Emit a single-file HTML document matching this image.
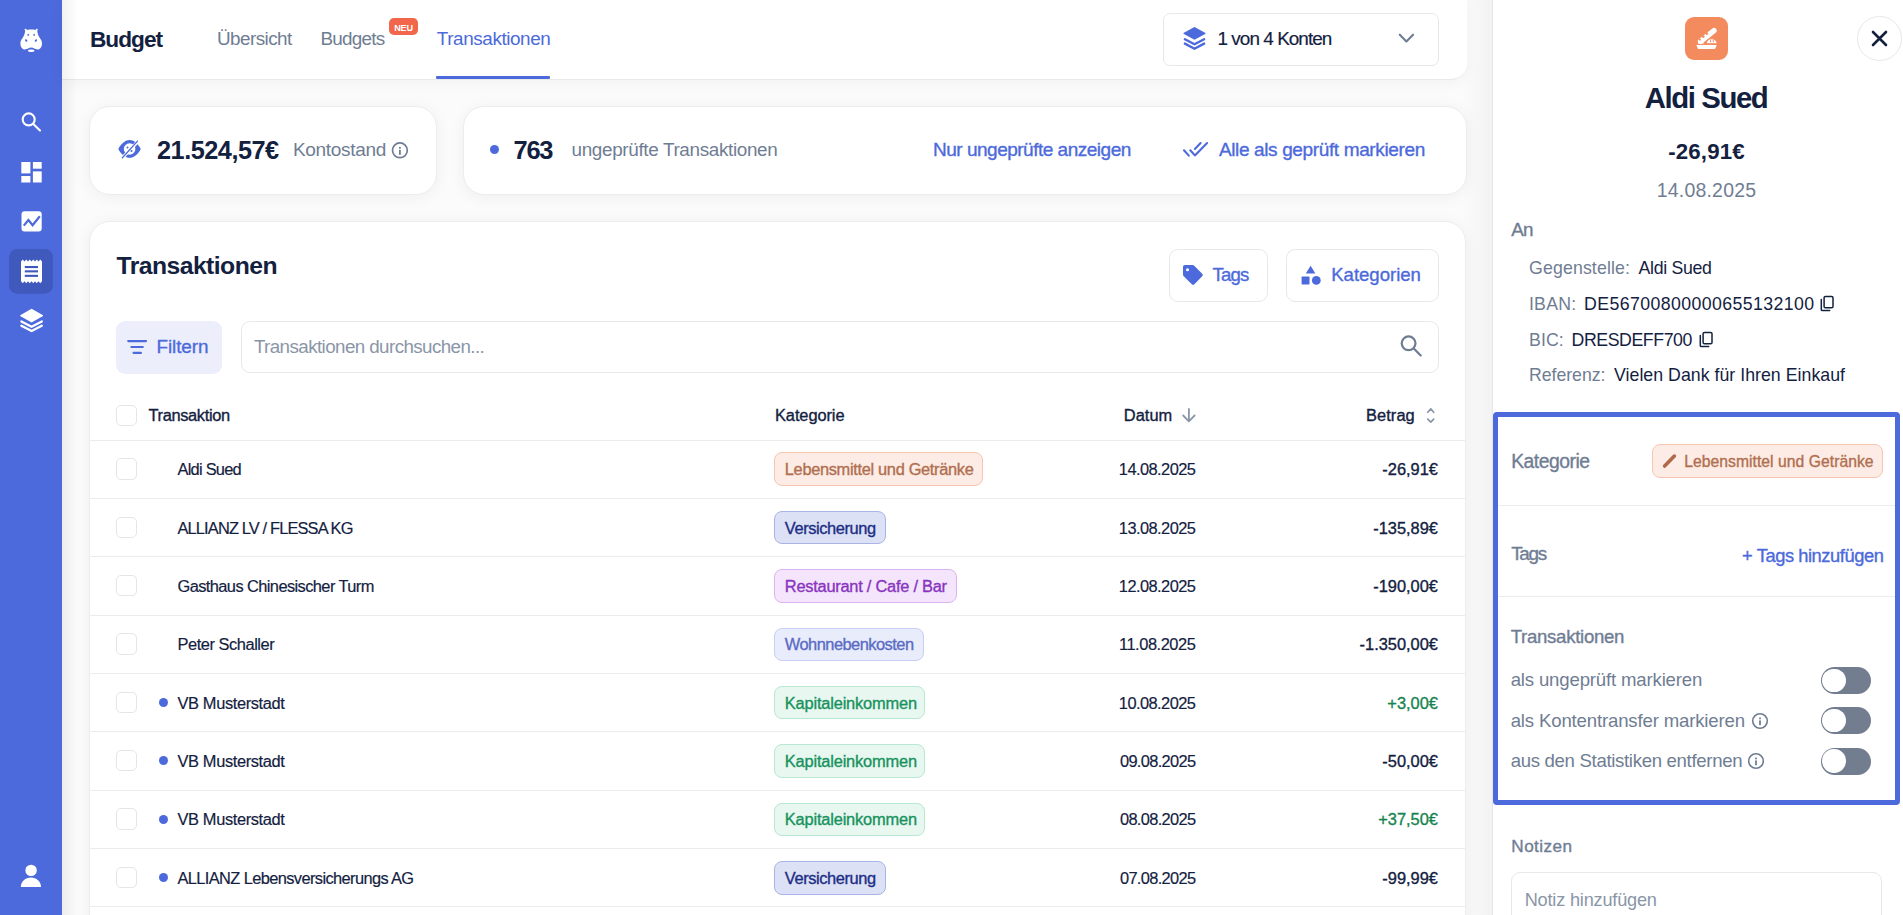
<!DOCTYPE html>
<html><head><meta charset="utf-8">
<style>
*{box-sizing:border-box;margin:0;padding:0}
html,body{width:1903px;height:915px;overflow:hidden}
body{font-family:"Liberation Sans",sans-serif;background:#fbfbfb;position:relative;color:#13213f}
.abs{position:absolute}
.t{position:absolute;white-space:nowrap;line-height:1}
.cb{position:absolute;width:21.5px;height:21.5px;border:1px solid #e3e6ea;border-radius:5px;background:#fff}
.pill{position:absolute;height:33.5px;border-radius:8px;border:1px solid}
.p-or{background:#fdece5;border-color:#f8c5b0}
.p-bl{background:#dde1f5;border-color:#a8b4e6}
.p-pu{background:#f4e5fc;border-color:#ddb2f1}
.p-lb{background:#e9ecfb;border-color:#c8cff2}
.p-gr{background:#e8f8f1;border-color:#b6e8d2}
.dot{position:absolute;width:9px;height:9px;border-radius:50%;background:#4c6adb}
.tog{position:absolute;width:50px;height:27px;border-radius:14px;background:#737d90}
.tog:after{content:"";position:absolute;left:1.7px;top:1.7px;width:23.6px;height:23.6px;border-radius:50%;background:#fff}
.card{position:absolute;background:#fff;border:1px solid #ededee;border-radius:21px;box-shadow:0 2px 16px rgba(0,0,0,.055)}
</style></head><body>
<div class="abs" style="left:1462px;top:0;width:30px;height:915px;background:linear-gradient(90deg,rgba(0,0,0,0),rgba(0,0,0,.035))"></div>
<div class="abs" style="left:0px;top:0px;width:62px;height:915px;background:#4c6adb"></div>
<div class="abs" style="left:62px;top:0;width:1404.5px;height:80px;background:#fff;border-bottom:1px solid #e9e9ea;border-bottom-right-radius:16px;box-shadow:0 3px 14px rgba(0,0,0,.04)"></div>
<div class="abs" style="left:62px;top:0;width:16px;height:915px;background:linear-gradient(90deg,rgba(0,0,0,.055),rgba(0,0,0,0))"></div>
<div id="t1" class="t" style="top:28.00px;font-size:22.67px;color:#13213f;font-weight:bold;left:90.00px;letter-spacing:-1.000px;">Budget</div>
<div id="t2" class="t" style="top:30.00px;font-size:18.90px;color:#6f7d93;left:217.00px;letter-spacing:-0.562px;">Übersicht</div>
<div id="t3" class="t" style="top:30.00px;font-size:18.90px;color:#6f7d93;left:320.50px;letter-spacing:-0.750px;">Budgets</div>
<div class="abs" style="left:389.2px;top:17.9px;width:28.6px;height:17.5px;background:#f2674b;border-radius:5px"></div>
<div id="t4" class="t" style="top:24.00px;font-size:9.16px;color:#fff;font-weight:bold;left:403.50px;transform:translateX(-50%);letter-spacing:-0.250px;">NEU</div>
<div id="t5" class="t" style="top:30.00px;font-size:18.90px;color:#4c6adb;left:436.80px;letter-spacing:-0.417px;">Transaktionen</div>
<div class="abs" style="left:436.2px;top:75.6px;width:113.6px;height:3.2px;background:#4c6adb;border-radius:1px"></div>
<div class="abs" style="left:1162.5px;top:12.5px;width:276.5px;height:53px;background:#fff;border:1px solid #e6e8ec;border-radius:7px"></div>
<div id="t6" class="t" style="top:30.00px;font-size:18.90px;color:#13213f;left:1217.50px;-webkit-text-stroke:0.18px #13213f;letter-spacing:-0.946px;">1 von 4 Konten</div>
<div class="card" style="left:88.8px;top:105.5px;width:348px;height:89px"></div>
<div id="t7" class="t" style="top:138.00px;font-size:25.29px;color:#13213f;font-weight:bold;left:157.00px;letter-spacing:-0.489px;">21.524,57€</div>
<div id="t8" class="t" style="top:140.00px;font-size:19.04px;color:#6f7d93;left:292.90px;letter-spacing:-0.322px;">Kontostand</div>
<div class="card" style="left:463px;top:105.5px;width:1003.5px;height:89px"></div>
<div class="dot" style="left:490px;top:144.8px"></div>
<div id="t9" class="t" style="top:138.00px;font-size:25.44px;color:#13213f;font-weight:bold;left:513.50px;letter-spacing:-1.250px;">763</div>
<div id="t10" class="t" style="top:141.00px;font-size:18.90px;color:#6f7d93;left:571.50px;letter-spacing:-0.348px;">ungeprüfte Transaktionen</div>
<div id="t11" class="t" style="top:140.00px;font-size:19.04px;color:#4c6adb;left:933.00px;-webkit-text-stroke:0.35px #4c6adb;letter-spacing:-0.509px;">Nur ungeprüfte anzeigen</div>
<div id="t12" class="t" style="top:140.00px;font-size:19.04px;color:#4c6adb;left:1218.90px;-webkit-text-stroke:0.35px #4c6adb;letter-spacing:-0.376px;">Alle als geprüft markieren</div>
<div class="card" style="left:88.8px;top:220.5px;width:1377.7px;height:760px"></div>
<div id="t13" class="t" style="top:254.00px;font-size:24.71px;color:#13213f;font-weight:bold;left:116.50px;letter-spacing:-0.542px;">Transaktionen</div>
<div class="abs" style="left:1168.5px;top:248.5px;width:99px;height:53px;border:1px solid #e6e8ec;border-radius:9px"></div>
<div id="t14" class="t" style="top:266.00px;font-size:18.60px;color:#4c6adb;left:1212.40px;-webkit-text-stroke:0.35px #4c6adb;letter-spacing:-0.800px;">Tags</div>
<div class="abs" style="left:1286.3px;top:248.5px;width:152.4px;height:53px;border:1px solid #e6e8ec;border-radius:9px"></div>
<div id="t15" class="t" style="top:266.00px;font-size:18.60px;color:#4c6adb;left:1331.20px;-webkit-text-stroke:0.35px #4c6adb;letter-spacing:-0.022px;">Kategorien</div>
<div class="abs" style="left:116px;top:320.5px;width:106px;height:53px;background:#eceffb;border-radius:9px"></div>
<div id="t16" class="t" style="top:338.00px;font-size:18.90px;color:#4c6adb;left:156.50px;-webkit-text-stroke:0.35px #4c6adb;letter-spacing:-0.083px;">Filtern</div>
<div class="abs" style="left:240.5px;top:320.5px;width:1198.2px;height:52px;border:1px solid #e6e8ec;border-radius:9px"></div>
<div id="t17" class="t" style="top:338.00px;font-size:18.75px;color:#8a96a8;left:253.90px;letter-spacing:-0.570px;">Transaktionen durchsuchen...</div>
<div class="cb" style="left:115.5px;top:404.5px"></div>
<div id="t18" class="t" style="top:407.00px;font-size:16.42px;color:#13213f;left:148.50px;-webkit-text-stroke:0.35px #13213f;letter-spacing:-0.350px;">Transaktion</div>
<div id="t19" class="t" style="top:407.00px;font-size:16.42px;color:#13213f;left:775.00px;-webkit-text-stroke:0.35px #13213f;letter-spacing:-0.088px;">Kategorie</div>
<div id="t20" class="t" style="top:407.00px;font-size:16.42px;color:#13213f;left:1123.75px;-webkit-text-stroke:0.35px #13213f;letter-spacing:0.050px;">Datum</div>
<div id="t21" class="t" style="top:407.00px;font-size:16.42px;color:#13213f;left:1366.00px;-webkit-text-stroke:0.35px #13213f;letter-spacing:0.080px;">Betrag</div>
<div class="abs" style="left:88.8px;top:439.5px;width:1377.7px;height:1px;background:#ededee"></div>
<div class="cb" style="left:115.5px;top:458.18px"></div>
<div id="t22" class="t" style="top:461.00px;font-size:16.42px;color:#13213f;left:177.50px;-webkit-text-stroke:0.18px #13213f;letter-spacing:-0.750px;">Aldi Sued</div>
<div class="pill p-or" style="left:774px;top:452.48px;width:209px"></div>
<div id="t23" class="t" style="top:461.00px;font-size:16.42px;color:#b06f4f;left:784.80px;-webkit-text-stroke:0.35px #b06f4f;letter-spacing:-0.333px;">Lebensmittel und Getränke</div>
<div id="t24" class="t" style="top:461.00px;font-size:16.42px;color:#13213f;right:707.60px;-webkit-text-stroke:0.18px #13213f;letter-spacing:-0.556px;">14.08.2025</div>
<div id="t25" class="t" style="top:461.00px;font-size:16.42px;color:#13213f;right:465.00px;-webkit-text-stroke:0.35px #13213f;">-26,91€</div>
<div class="abs" style="left:88.8px;top:497.86px;width:1377.7px;height:1px;background:#ededee"></div>
<div class="cb" style="left:115.5px;top:516.54px"></div>
<div id="t26" class="t" style="top:520.00px;font-size:16.42px;color:#13213f;left:177.50px;-webkit-text-stroke:0.18px #13213f;letter-spacing:-0.857px;">ALLIANZ LV / FLESSA KG</div>
<div class="pill p-bl" style="left:774px;top:510.84px;width:111.6px"></div>
<div id="t27" class="t" style="top:520.00px;font-size:16.42px;color:#1c2d85;left:784.80px;-webkit-text-stroke:0.35px #1c2d85;letter-spacing:-0.400px;">Versicherung</div>
<div id="t28" class="t" style="top:520.00px;font-size:16.42px;color:#13213f;right:707.60px;-webkit-text-stroke:0.18px #13213f;letter-spacing:-0.556px;">13.08.2025</div>
<div id="t29" class="t" style="top:520.00px;font-size:16.42px;color:#13213f;right:465.00px;-webkit-text-stroke:0.35px #13213f;">-135,89€</div>
<div class="abs" style="left:88.8px;top:556.22px;width:1377.7px;height:1px;background:#ededee"></div>
<div class="cb" style="left:115.5px;top:574.90px"></div>
<div id="t30" class="t" style="top:578.00px;font-size:16.42px;color:#13213f;left:177.50px;-webkit-text-stroke:0.18px #13213f;letter-spacing:-0.588px;">Gasthaus Chinesischer Turm</div>
<div class="pill p-pu" style="left:774px;top:569.20px;width:182.5px"></div>
<div id="t31" class="t" style="top:578.00px;font-size:16.42px;color:#8934bf;left:784.80px;-webkit-text-stroke:0.35px #8934bf;letter-spacing:-0.250px;">Restaurant / Cafe / Bar</div>
<div id="t32" class="t" style="top:578.00px;font-size:16.42px;color:#13213f;right:707.60px;-webkit-text-stroke:0.18px #13213f;letter-spacing:-0.556px;">12.08.2025</div>
<div id="t33" class="t" style="top:578.00px;font-size:16.42px;color:#13213f;right:465.00px;-webkit-text-stroke:0.35px #13213f;">-190,00€</div>
<div class="abs" style="left:88.8px;top:614.58px;width:1377.7px;height:1px;background:#ededee"></div>
<div class="cb" style="left:115.5px;top:633.26px"></div>
<div id="t34" class="t" style="top:636.00px;font-size:16.42px;color:#13213f;left:177.50px;-webkit-text-stroke:0.18px #13213f;letter-spacing:-0.454px;">Peter Schaller</div>
<div class="pill p-lb" style="left:774px;top:627.56px;width:149.7px"></div>
<div id="t35" class="t" style="top:636.00px;font-size:16.42px;color:#5a6bc4;left:784.80px;-webkit-text-stroke:0.35px #5a6bc4;letter-spacing:-0.521px;">Wohnnebenkosten</div>
<div id="t36" class="t" style="top:636.00px;font-size:16.42px;color:#13213f;right:707.60px;-webkit-text-stroke:0.18px #13213f;letter-spacing:-0.444px;">11.08.2025</div>
<div id="t37" class="t" style="top:636.00px;font-size:16.42px;color:#13213f;right:465.00px;-webkit-text-stroke:0.35px #13213f;">-1.350,00€</div>
<div class="abs" style="left:88.8px;top:672.94px;width:1377.7px;height:1px;background:#ededee"></div>
<div class="cb" style="left:115.5px;top:691.62px"></div>
<div class="dot" style="left:159.1px;top:697.92px"></div>
<div id="t38" class="t" style="top:695.00px;font-size:16.42px;color:#13213f;left:177.50px;-webkit-text-stroke:0.18px #13213f;letter-spacing:-0.369px;">VB Musterstadt</div>
<div class="pill p-gr" style="left:774px;top:685.92px;width:151.3px"></div>
<div id="t39" class="t" style="top:695.00px;font-size:16.42px;color:#18925d;left:784.80px;-webkit-text-stroke:0.35px #18925d;letter-spacing:-0.180px;">Kapitaleinkommen</div>
<div id="t40" class="t" style="top:695.00px;font-size:16.42px;color:#13213f;right:707.60px;-webkit-text-stroke:0.18px #13213f;letter-spacing:-0.556px;">10.08.2025</div>
<div id="t41" class="t" style="top:695.00px;font-size:16.42px;color:#17844f;right:465.00px;-webkit-text-stroke:0.35px #17844f;">+3,00€</div>
<div class="abs" style="left:88.8px;top:731.3px;width:1377.7px;height:1px;background:#ededee"></div>
<div class="cb" style="left:115.5px;top:749.98px"></div>
<div class="dot" style="left:159.1px;top:756.28px"></div>
<div id="t42" class="t" style="top:753.00px;font-size:16.42px;color:#13213f;left:177.50px;-webkit-text-stroke:0.18px #13213f;letter-spacing:-0.369px;">VB Musterstadt</div>
<div class="pill p-gr" style="left:774px;top:744.28px;width:151.3px"></div>
<div id="t43" class="t" style="top:753.00px;font-size:16.42px;color:#18925d;left:784.80px;-webkit-text-stroke:0.35px #18925d;letter-spacing:-0.180px;">Kapitaleinkommen</div>
<div id="t44" class="t" style="top:753.00px;font-size:16.42px;color:#13213f;right:707.60px;-webkit-text-stroke:0.18px #13213f;letter-spacing:-0.667px;">09.08.2025</div>
<div id="t45" class="t" style="top:753.00px;font-size:16.42px;color:#13213f;right:465.00px;-webkit-text-stroke:0.35px #13213f;">-50,00€</div>
<div class="abs" style="left:88.8px;top:789.66px;width:1377.7px;height:1px;background:#ededee"></div>
<div class="cb" style="left:115.5px;top:808.34px"></div>
<div class="dot" style="left:159.1px;top:814.64px"></div>
<div id="t46" class="t" style="top:811.00px;font-size:16.42px;color:#13213f;left:177.50px;-webkit-text-stroke:0.18px #13213f;letter-spacing:-0.369px;">VB Musterstadt</div>
<div class="pill p-gr" style="left:774px;top:802.64px;width:151.3px"></div>
<div id="t47" class="t" style="top:811.00px;font-size:16.42px;color:#18925d;left:784.80px;-webkit-text-stroke:0.35px #18925d;letter-spacing:-0.180px;">Kapitaleinkommen</div>
<div id="t48" class="t" style="top:811.00px;font-size:16.42px;color:#13213f;right:707.60px;-webkit-text-stroke:0.18px #13213f;letter-spacing:-0.667px;">08.08.2025</div>
<div id="t49" class="t" style="top:811.00px;font-size:16.42px;color:#17844f;right:465.00px;-webkit-text-stroke:0.35px #17844f;">+37,50€</div>
<div class="abs" style="left:88.8px;top:848.02px;width:1377.7px;height:1px;background:#ededee"></div>
<div class="cb" style="left:115.5px;top:866.70px"></div>
<div class="dot" style="left:159.1px;top:873.00px"></div>
<div id="t50" class="t" style="top:870.00px;font-size:16.42px;color:#13213f;left:177.50px;-webkit-text-stroke:0.18px #13213f;letter-spacing:-0.614px;">ALLIANZ Lebensversicherungs AG</div>
<div class="pill p-bl" style="left:774px;top:861.00px;width:111.6px"></div>
<div id="t51" class="t" style="top:870.00px;font-size:16.42px;color:#1c2d85;left:784.80px;-webkit-text-stroke:0.35px #1c2d85;letter-spacing:-0.400px;">Versicherung</div>
<div id="t52" class="t" style="top:870.00px;font-size:16.42px;color:#13213f;right:707.60px;-webkit-text-stroke:0.18px #13213f;letter-spacing:-0.667px;">07.08.2025</div>
<div id="t53" class="t" style="top:870.00px;font-size:16.42px;color:#13213f;right:465.00px;-webkit-text-stroke:0.35px #13213f;">-99,99€</div>
<div class="abs" style="left:88.8px;top:906.38px;width:1377.7px;height:1px;background:#ededee"></div>
<div class="abs" style="left:1492px;top:0;width:411px;height:915px;background:#fff;border-left:1px solid #e6e6e8"></div>
<div class="abs" style="left:1857.2px;top:16.1px;width:44.5px;height:44.5px;border:1px solid #e6e8ec;border-radius:50%"></div>
<div class="abs" style="left:1685px;top:16.5px;width:43px;height:43.5px;background:#f38b5f;border-radius:9px"></div>
<div id="t54" class="t" style="top:83.00px;font-size:29.36px;color:#13213f;font-weight:bold;left:1706.10px;transform:translateX(-50%);letter-spacing:-1.425px;">Aldi Sued</div>
<div id="t55" class="t" style="top:141.00px;font-size:22.24px;color:#13213f;font-weight:bold;left:1706.50px;transform:translateX(-50%);letter-spacing:0.167px;">-26,91€</div>
<div id="t56" class="t" style="top:181.00px;font-size:19.48px;color:#6f7d93;left:1706.50px;transform:translateX(-50%);letter-spacing:0.222px;">14.08.2025</div>
<div id="t57" class="t" style="top:221.00px;font-size:18.90px;color:#6f7d93;left:1511.20px;-webkit-text-stroke:0.35px #6f7d93;letter-spacing:-0.700px;">An</div>
<div id="t58" class="t" style="top:260.00px;font-size:17.73px;color:#6f7d93;left:1529.00px;letter-spacing:0.136px;">Gegenstelle:</div>
<div id="t59" class="t" style="top:260.00px;font-size:17.73px;color:#13213f;left:1638.50px;letter-spacing:-0.312px;">Aldi Sued</div>
<div id="t60" class="t" style="top:296.00px;font-size:17.73px;color:#6f7d93;left:1529.00px;letter-spacing:0.200px;">IBAN:</div>
<div id="t61" class="t" style="top:296.00px;font-size:17.73px;color:#13213f;left:1584.10px;letter-spacing:0.400px;">DE56700800000655132100</div>
<div id="t62" class="t" style="top:332.00px;font-size:17.73px;color:#6f7d93;left:1529.00px;letter-spacing:0.067px;">BIC:</div>
<div id="t63" class="t" style="top:332.00px;font-size:17.73px;color:#13213f;left:1571.50px;letter-spacing:-0.420px;">DRESDEFF700</div>
<div id="t64" class="t" style="top:367.00px;font-size:17.73px;color:#6f7d93;left:1529.00px;letter-spacing:-0.050px;">Referenz:</div>
<div id="t65" class="t" style="top:367.00px;font-size:17.73px;color:#13213f;left:1614.00px;letter-spacing:0.029px;">Vielen Dank für Ihren Einkauf</div>
<div class="abs" style="left:1492.8px;top:411.5px;width:407px;height:393.2px;border:5px solid #4c6adb;border-radius:4px"></div>
<div id="t66" class="t" style="top:452.00px;font-size:19.33px;color:#6f7d93;left:1511.20px;-webkit-text-stroke:0.35px #6f7d93;letter-spacing:-0.500px;">Kategorie</div>
<div class="pill p-or" style="left:1651.5px;top:444px;width:231.5px"></div>
<div id="t67" class="t" style="top:454.00px;font-size:15.70px;color:#b06f4f;left:1684.20px;-webkit-text-stroke:0.35px #b06f4f;letter-spacing:0.042px;">Lebensmittel und Getränke</div>
<div class="abs" style="left:1497.5px;top:505px;width:397.5px;height:1px;background:#ececee"></div>
<div id="t68" class="t" style="top:545.00px;font-size:18.90px;color:#6f7d93;left:1511.20px;-webkit-text-stroke:0.35px #6f7d93;letter-spacing:-1.333px;">Tags</div>
<div id="t69" class="t" style="top:547.00px;font-size:18.31px;color:#4c6adb;left:1742.10px;-webkit-text-stroke:0.35px #4c6adb;letter-spacing:-0.431px;">+ Tags hinzufügen</div>
<div class="abs" style="left:1497.5px;top:596px;width:397.5px;height:1px;background:#ececee"></div>
<div id="t70" class="t" style="top:628.00px;font-size:18.60px;color:#6f7d93;left:1510.70px;-webkit-text-stroke:0.35px #6f7d93;letter-spacing:-0.283px;">Transaktionen</div>
<div id="t71" class="t" style="top:671.00px;font-size:18.60px;color:#6f7d93;left:1510.70px;letter-spacing:-0.168px;">als ungeprüft markieren</div>
<div id="t72" class="t" style="top:712.00px;font-size:18.60px;color:#6f7d93;left:1510.70px;letter-spacing:-0.163px;">als Kontentransfer markieren</div>
<div id="t73" class="t" style="top:752.00px;font-size:18.60px;color:#6f7d93;left:1510.70px;letter-spacing:-0.321px;">aus den Statistiken entfernen</div>
<div class="tog" style="left:1820.5px;top:667px"></div>
<div class="tog" style="left:1820.5px;top:707px"></div>
<div class="tog" style="left:1820.5px;top:747.8px"></div>
<div id="t74" class="t" style="top:838.00px;font-size:17.15px;color:#6f7d93;left:1511.30px;-webkit-text-stroke:0.35px #6f7d93;letter-spacing:0.450px;">Notizen</div>
<div class="abs" style="left:1511.3px;top:872px;width:371px;height:90px;border:1px solid #e6e8ec;border-radius:9px"></div>
<div id="t75" class="t" style="top:891.00px;font-size:18.17px;color:#8a96a8;left:1524.70px;letter-spacing:-0.200px;">Notiz hinzufügen</div>
<svg class="abs" style="left:1871px;top:30px" width="17" height="17" viewBox="0 0 17 17"><path d="M2 2L15 15M15 2L2 15" stroke="#13213f" stroke-width="2.6" stroke-linecap="round"/></svg>
<!-- basket -->
<svg class="abs" style="left:1690px;top:22px" width="34" height="32" viewBox="1690 22 34 32">
 <path fill="#fff" d="M1696.3 44.9h20.4l-1.7 4h-17z"/>
 <path d="M1700.6 41.3L1714 30.6" stroke="#fff" stroke-width="5.4" stroke-linecap="round"/>
 <path fill="#fff" d="M1697.8 43.6c0-1.6 1-2.9 2.6-3.6l4 3.6z"/>
 <circle cx="1703.3" cy="36.6" r="1.3" fill="#f38b5f"/><circle cx="1706.9" cy="33.6" r="1.3" fill="#f38b5f"/><circle cx="1699.8" cy="39.6" r="1.1" fill="#f38b5f"/>
 <path fill="#fff" stroke="#f38b5f" stroke-width="1.2" d="M1706.3 43.8c0-3.1 2.4-5.2 5.4-5.2s5.6 2.1 5.6 5.2z"/>
 <path d="M1710.6 39.8v2.6M1713.3 39.8v2.6" stroke="#f38b5f" stroke-width="1"/>
</svg>
<!-- copy icons -->
<svg class="abs" style="left:1815px;top:292px" width="24" height="24" viewBox="1815 292 24 24">
 <rect x="1824.1" y="296.5" width="8.9" height="11.2" rx="1.3" fill="none" stroke="#13213f" stroke-width="1.5"/>
 <path d="M1821.3 299.5v10c0 .6.5 1.1 1.1 1.1h7.3" fill="none" stroke="#13213f" stroke-width="1.5" stroke-linecap="round"/>
</svg>
<svg class="abs" style="left:1694px;top:328px" width="24" height="24" viewBox="1694 328 24 24">
 <rect x="1703.1" y="332.5" width="8.9" height="11.2" rx="1.3" fill="none" stroke="#13213f" stroke-width="1.5"/>
 <path d="M1700.3 335.5v10c0 .6.5 1.1 1.1 1.1h7.3" fill="none" stroke="#13213f" stroke-width="1.5" stroke-linecap="round"/>
</svg>
<!-- pencil -->
<svg class="abs" style="left:1658px;top:450px" width="22" height="22" viewBox="1658 450 22 22">
 <path d="M1664.6 466l9.8-9.9" stroke="#b0694a" stroke-width="3.6" stroke-linecap="round"/>
 <path d="M1664 466.8l-.4.1.2-1.2z" fill="#b0694a"/>
</svg>
<!-- info icons panel -->
<svg class="abs" style="left:1740px;top:700px" width="40" height="75" viewBox="1740 700 40 75">
 <circle cx="1760" cy="721" r="7.3" fill="none" stroke="#6f7d93" stroke-width="1.6"/>
 <rect x="1759.1" y="717.6" width="1.8" height="1.7" fill="#6f7d93"/><rect x="1759.1" y="720.4" width="1.8" height="4.8" fill="#6f7d93"/>
</svg>
<svg class="abs" style="left:1735px;top:740px" width="40" height="40" viewBox="1735 740 40 40">
 <circle cx="1756" cy="761" r="7.3" fill="none" stroke="#6f7d93" stroke-width="1.6"/>
 <rect x="1755.1" y="757.6" width="1.8" height="1.7" fill="#6f7d93"/><rect x="1755.1" y="760.4" width="1.8" height="4.8" fill="#6f7d93"/>
</svg>
<!-- sidebar icons -->
<svg class="abs" style="left:0;top:0" width="62" height="915" viewBox="0 0 62 915">
 <!-- hippo -->
 <path fill="#ffffff" d="M25.2 30.5C24.2 29.8 24.4 28.6 25.5 28.7C26.3 28.8 26.8 29.5 27 30C28.4 29.6 29.8 29.5 31.2 29.5C32.6 29.5 34 29.6 35.4 30C35.6 29.5 36.1 28.8 36.9 28.7C38 28.6 38.2 29.8 37.2 30.5C37.5 33 38 35 39.5 37.5C41 39.5 42 41 42 43.5C42 47.5 39.5 49.5 37.5 49.5C35 49.5 33.5 47.6 31.2 47.6C28.9 47.6 27.4 49.5 24.9 49.5C22.9 49.5 20.4 47.5 20.4 43.5C20.4 41 21.4 39.5 22.9 37.5C24.4 35 24.9 33 25.2 30.5Z"/>
 <ellipse cx="31.2" cy="50.7" rx="3.2" ry="1.2" fill="#ffffff"/>
 <ellipse cx="28.2" cy="34.9" rx=".75" ry="1.05" fill="#4c6adb"/><ellipse cx="34.1" cy="34.9" rx=".75" ry="1.05" fill="#4c6adb"/>
 <ellipse cx="26.2" cy="40.5" rx="1.05" ry="1.4" fill="#4c6adb" transform="rotate(-35 26.2 40.5)"/><ellipse cx="35.9" cy="40.5" rx="1.05" ry="1.4" fill="#4c6adb" transform="rotate(35 35.9 40.5)"/>
 <!-- search -->
 <circle cx="28.7" cy="119.4" r="6" fill="none" stroke="#ffffff" stroke-width="2.1"/>
 <path d="M33.3 123.9L40 130.5" stroke="#ffffff" stroke-width="2.1" stroke-linecap="round"/>
 <!-- dashboard -->
 <rect x="21.3" y="162" width="9.1" height="11.4" fill="#ffffff"/>
 <rect x="32.9" y="162" width="8.8" height="6.7" fill="#ffffff"/>
 <rect x="21.3" y="176" width="9.1" height="6.5" fill="#ffffff"/>
 <rect x="32.9" y="171.4" width="8.8" height="11.1" fill="#ffffff"/>
 <!-- chart -->
 <rect x="21.5" y="211.2" width="20.2" height="20.3" rx="3" fill="#ffffff"/>
 <path d="M23.8 225.6L28.4 220L32.6 225.2L39.8 216.2" fill="none" stroke="#4c6adb" stroke-width="2.2" stroke-linejoin="miter"/>
 <!-- receipt selected -->
 <rect x="9.1" y="249" width="43.8" height="44.7" rx="8" fill="#3f59bd"/>
 <path fill="#ffffff" d="M21 261.4 l1.75 -1.9 l1.75 1.9 l1.75 -1.9 l1.75 1.9 l1.75 -1.9 l1.75 1.9 l1.75 -1.9 l1.75 1.9 l1.75 -1.9 l1.75 1.9 l1.75 -1.9 l1.75 1.9 V281.3 l-1.75 1.9 l-1.75 -1.9 l-1.75 1.9 l-1.75 -1.9 l-1.75 1.9 l-1.75 -1.9 l-1.75 1.9 l-1.75 -1.9 l-1.75 1.9 l-1.75 -1.9 l-1.75 1.9 l-1.75 -1.9z"/>
 <rect x="24.8" y="266" width="13.2" height="2.1" fill="#3f59bd"/>
 <rect x="24.8" y="270.3" width="13.2" height="2.1" fill="#3f59bd"/>
 <rect x="24.8" y="274.8" width="13.2" height="2.1" fill="#3f59bd"/>
 <!-- layers -->
 <path fill="#ffffff" d="M31.6 308.8l11 6.2c.6.4.6.9 0 1.3l-11 6.2-11-6.2c-.6-.4-.6-.9 0-1.3z"/>
 <path d="M21.4 321.4l10.2 5.4 10.2-5.4M21.4 325.7l10.2 5.4 10.2-5.4" fill="none" stroke="#ffffff" stroke-width="2.3" stroke-linecap="round" stroke-linejoin="round"/>
 <!-- user -->
 <circle cx="31.1" cy="870.4" r="5.7" fill="#ffffff"/>
 <path fill="#ffffff" d="M20.8 887c0-5.5 4.6-9.5 10.1-9.5s10.1 4 10.1 9.5z"/>
</svg>
<!-- dropdown layers + chevron -->
<svg class="abs" style="left:1180px;top:24px" width="240" height="30" viewBox="1180 24 240 30">
 <path fill="#4c6adb" d="M1194.5 27l10.6 5.7c.6.4.6.9 0 1.3l-10.6 5.8-10.6-5.8c-.6-.4-.6-.9 0-1.3z"/>
 <path d="M1184.9 39.2l9.6 5.1 9.6-5.1M1184.9 43.6l9.6 5.1 9.6-5.1" fill="none" stroke="#4c6adb" stroke-width="2.4" stroke-linecap="round" stroke-linejoin="round"/>
 <path d="M1399.8 34.7l6.6 6.8 6.7-6.8" fill="none" stroke="#6f7d93" stroke-width="2.1" stroke-linecap="round" stroke-linejoin="round"/>
</svg>
<!-- eye slash -->
<svg class="abs" style="left:115px;top:136px" width="30" height="26" viewBox="115 136 30 26">
 <path fill="#4c6adb" fill-rule="evenodd" d="M118.3 149c2.8-5.6 7.4-9 11.3-9s8.5 3.4 11.2 9c-2.7 5.6-7.3 8.8-11.2 8.8s-8.5-3.2-11.3-8.8zM129.6 143.2a5.8 5.8 0 1 0 0 11.6a5.8 5.8 0 1 0 0-11.6z"/>
 <path d="M123 157.2L137.8 141.6" stroke="#ffffff" stroke-width="3.2"/>
 <path d="M122.4 157.7L137.5 141.1" stroke="#4c6adb" stroke-width="1.3" stroke-linecap="round"/>
 <circle cx="127.5" cy="147.5" r="1" fill="#4c6adb"/><circle cx="131.5" cy="151" r="1" fill="#4c6adb"/>
</svg>
<!-- info icons -->
<svg class="abs" style="left:390px;top:140px" width="20" height="20" viewBox="390 140 20 20">
 <circle cx="399.9" cy="150.3" r="7.4" fill="none" stroke="#6f7d93" stroke-width="1.7"/>
 <rect x="399" y="147" width="1.8" height="1.7" fill="#6f7d93"/><rect x="399" y="149.8" width="1.8" height="5" fill="#6f7d93"/>
</svg>
<!-- double check -->
<svg class="abs" style="left:1180px;top:138px" width="32" height="22" viewBox="1180 138 32 22">
 <path d="M1184 150.3l4.8 5.3M1190.3 150.3l4.6 5.1 12.2-12.3M1194.9 149l5.7-5.9" fill="none" stroke="#4c6adb" stroke-width="2.1" stroke-linecap="round" stroke-linejoin="round"/>
</svg>
<!-- tag -->
<svg class="abs" style="left:1180px;top:262px" width="26" height="26" viewBox="1180 262 26 26">
 <path fill="#4c6adb" fill-rule="evenodd" transform="translate(-0.7 0.3)" d="M1185 264.6h8.2c.6 0 1.1.2 1.5.6l8.2 8.2c.7.7.7 1.9 0 2.6l-7.8 7.9c-.7.7-1.9.7-2.6 0l-8.3-8.3c-.3-.4-.5-.9-.5-1.4v-7.7c0-1 .9-1.9 1.9-1.9zM1188.2 267.9a1.55 1.55 0 1 0 0 3.1a1.55 1.55 0 1 0 0-3.1z"/>
</svg>
<!-- shapes -->
<svg class="abs" style="left:1298px;top:262px" width="26" height="26" viewBox="1298 262 26 26">
 <path fill="#4c6adb" d="M1310.6 265.8l4.8 7.8h-9.6z"/>
 <rect x="1301.6" y="276.4" width="7.9" height="8.1" rx=".8" fill="#4c6adb"/>
 <circle cx="1316.3" cy="280.4" r="4.4" fill="#4c6adb"/>
</svg>
<!-- filter -->
<svg class="abs" style="left:124px;top:336px" width="26" height="22" viewBox="124 336 26 22">
 <path d="M128.2 341.1h17.8M131.4 347h11.4M133.6 352.9h7.3" stroke="#4c6adb" stroke-width="2.2" stroke-linecap="round"/>
</svg>
<!-- search gray -->
<svg class="abs" style="left:1396px;top:332px" width="30" height="28" viewBox="1396 332 30 28">
 <circle cx="1408.6" cy="343.3" r="6.9" fill="none" stroke="#6f7d93" stroke-width="2.2"/>
 <path d="M1413.8 348.4L1420.7 355.4" stroke="#6f7d93" stroke-width="2.2" stroke-linecap="round"/>
</svg>
<!-- sort arrows -->
<svg class="abs" style="left:1178px;top:404px" width="260" height="22" viewBox="1178 404 260 22">
 <path d="M1188.9 409v12.3M1183.2 415.5l5.7 5.8 5.7-5.8" fill="none" stroke="#8a96a8" stroke-width="1.8" stroke-linecap="round" stroke-linejoin="round"/>
 <path d="M1427.8 412.3l3-3.4 2.9 3.4M1427.8 419.2l3 3 2.9-3" fill="none" stroke="#8a96a8" stroke-width="1.7" stroke-linecap="round" stroke-linejoin="round"/>
</svg>
</body></html>
